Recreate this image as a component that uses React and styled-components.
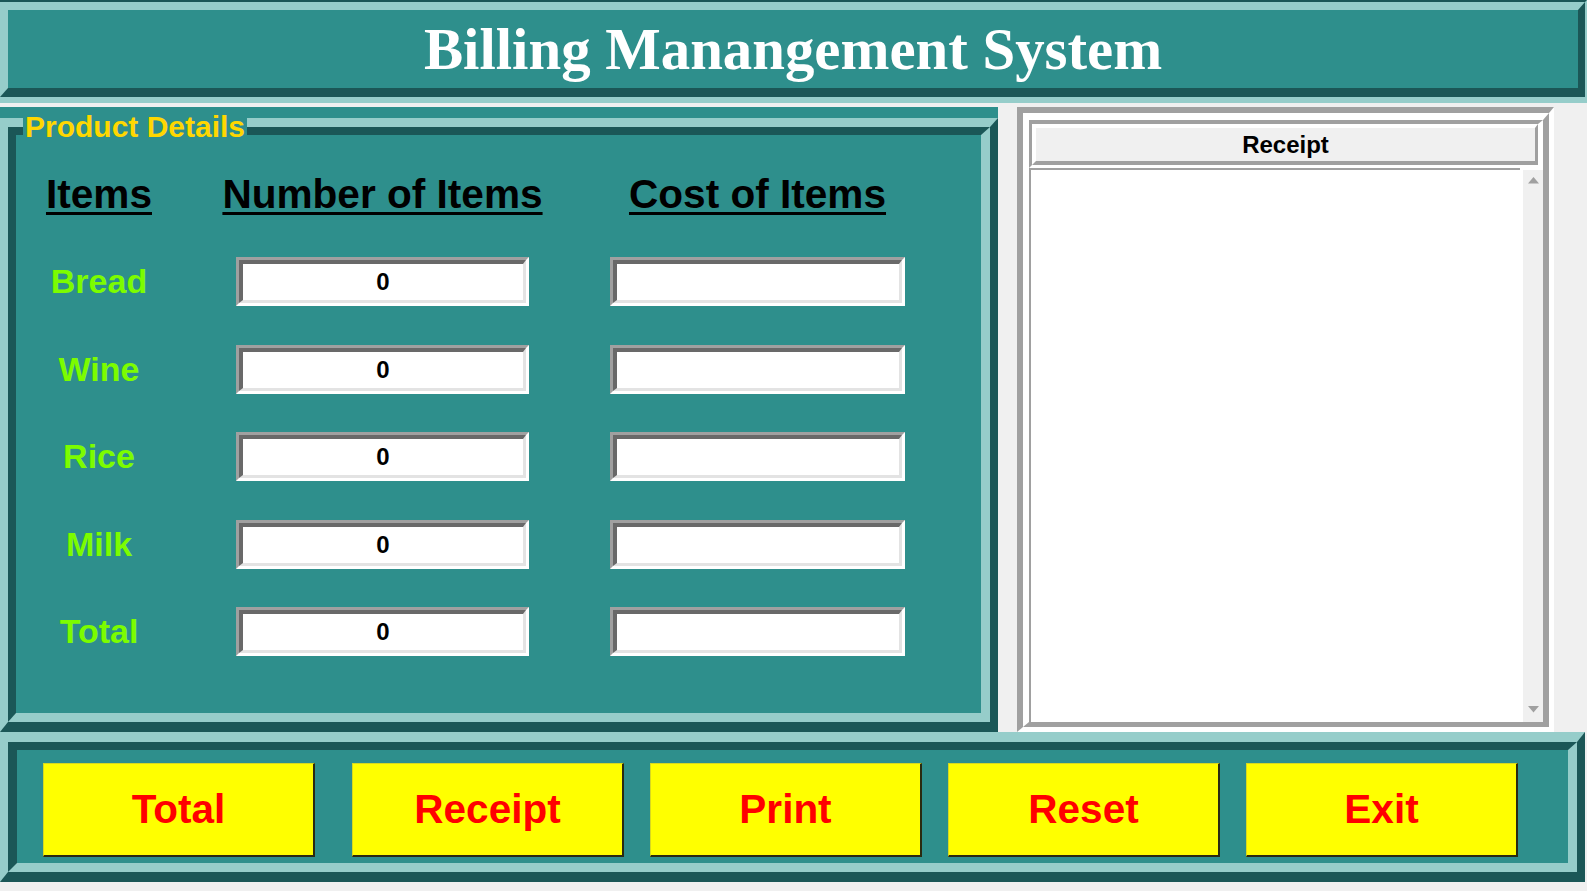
import React from "react";
import styled, { createGlobalStyle } from "styled-components";

const teal = "#2e8f8c";
const light = "#96cdca";
const dark = "#1b5757";
const g1 = "#a0a0a0";
const g2 = "#696969";
const g3 = "#e3e3e3";

const GlobalStyle = createGlobalStyle`
  html, body { margin: 0; padding: 0; background: #f0f0f0; overflow: hidden; }
  * { box-sizing: border-box; }
  #root { width: 1587px; height: 891px; }
`;

const Page = styled.div`
  width: 1587px;
  height: 891px;
  background: #f0f0f0;
  display: flex;
  flex-direction: column;
  font-family: "Liberation Sans", Arial, sans-serif;
`;

const TitleOuter = styled.header`
  height: 103px;
  border-style: solid;
  border-width: 2px 2px 6px 0;
  border-color: ${dark} ${light} ${light} ${dark};
`;

const TitleInner = styled.div`
  height: 100%;
  background: ${teal};
  border-style: solid;
  border-width: 8px 7px 9px 8px;
  border-color: ${light} ${dark} ${dark} ${light};
  display: flex;
  align-items: center;
  justify-content: center;
`;

const TitleText = styled.h1`
  margin: 0;
  font-family: "Liberation Serif", "Times New Roman", serif;
  font-weight: bold;
  font-size: 58.8px;
  line-height: 1;
  color: #ffffff;
  padding-top: 2px;
`;

const Main = styled.main`
  margin-top: 4px;
  height: 625px;
  display: flex;
`;

const ProductPanel = styled.section`
  width: 998px;
  height: 625px;
  background: ${teal};
  padding-top: 11px;
`;

const LabelOuter = styled.div`
  position: relative;
  height: 614px;
  border-style: solid;
  border-width: 9px 8px 10px 8px;
  border-color: ${light} ${dark} ${dark} ${light};
`;

const LabelInner = styled.div`
  height: 100%;
  background: ${teal};
  border-style: solid;
  border-width: 8px 9px 9px 8px;
  border-color: ${dark} ${light} ${light} ${dark};
`;

const Legend = styled.div`
  position: absolute;
  top: -15px;
  left: 15px;
  padding: 0 2px;
  background: ${teal};
  color: #ffd700;
  font-weight: bold;
  font-size: 30px;
  line-height: 30px;
`;

const ItemsGrid = styled.div`
  padding-top: 15px;
  display: grid;
  grid-template-columns: 166px 401px 349px;
  grid-template-rows: 88px repeat(5, 87.5px);
  align-items: center;
  justify-items: center;
`;

const HeaderCell = styled.div`
  font-weight: bold;
  font-size: 40.6px;
  color: #000;
  text-decoration: underline;
  text-decoration-thickness: 3px;
  text-underline-offset: 4px;
`;

const ItemLabel = styled.div`
  font-weight: bold;
  font-size: 34px;
  color: #7cfc00;
`;

const EntryFrame = styled.div`
  border-style: solid;
  border-width: 3px;
  border-color: ${g1} #ffffff #ffffff ${g1};
  display: flex;
`;

const Entry = styled.input`
  width: ${(p) => p.$w}px;
  height: 43px;
  margin: 0;
  padding: 0;
  background: #fff;
  border-style: solid;
  border-width: 4px 3px 3px 4px;
  border-color: ${g2} ${g3} ${g3} ${g2};
  outline: none;
  text-align: center;
  font-family: "Liberation Sans", Arial, sans-serif;
  font-weight: bold;
  font-size: 24px;
  color: #000;
`;

const ReceiptOuter = styled.aside`
  margin-left: 19px;
  width: 537px;
  height: 625px;
  border-style: solid;
  border-width: 6px 5px 5px 6px;
  border-color: ${g1} #fff #fff ${g1};
`;

const ReceiptInner = styled.div`
  height: 100%;
  border-style: solid;
  border-width: 7px 6px 5px 6px;
  border-color: #fff ${g1} ${g1} #fff;
  display: flex;
  flex-direction: column;
  background: #fff;
`;

const HeaderOuter = styled.div`
  height: 48px;
  border-style: solid;
  border-width: 4px 5px 3px 3px;
  border-color: ${g1} #fff #fff ${g1};
`;

const HeaderInner = styled.div`
  height: 100%;
  background: #f0f0f0;
  border-style: solid;
  border-width: 4px 3px 4px 4px;
  border-color: #fff ${g1} ${g1} #fff;
  display: flex;
  align-items: center;
  justify-content: center;
  font-weight: bold;
  font-size: 24px;
  color: #000;
`;

const ReceiptBody = styled.div`
  flex: 1;
  display: flex;
  background: #fff;
`;

const TextArea = styled.div`
  flex: 1;
  border-top: 2px solid ${g1};
  border-left: 2px solid ${g1};
  margin-right: 3px;
  background: #fff;
`;

const Scrollbar = styled.div`
  width: 20px;
  margin-top: 2px;
  background: #f0f0f0;
  display: flex;
  flex-direction: column;
  justify-content: space-between;
  align-items: center;
  padding: 7px 0 9px;
`;

const Arrow = ({ down }) => (
  <svg width="11" height="7" viewBox="0 0 11 7">
    <polygon
      points={down ? "0,0 11,0 5.5,6.5" : "0,6.5 11,6.5 5.5,0"}
      fill="#a0a0a0"
    />
  </svg>
);

const ButtonBarOuter = styled.footer`
  width: 1585px;
  height: 150px;
  border-style: solid;
  border-width: 10px 8px 10px 8px;
  border-color: ${light} ${dark} ${dark} ${light};
`;

const ButtonBarInner = styled.div`
  height: 100%;
  background: ${teal};
  border-style: solid;
  border-width: 8px 9px 9px 9px;
  border-color: ${dark} ${light} ${light} ${dark};
  display: flex;
  align-items: flex-start;
  gap: 26px;
  padding: 13px 0 0 26px;
`;

const ActionButton = styled.button`
  width: 272px;
  height: 94px;
  margin: 0 ${(p) => (p.$extra ? 11 : 0)}px 0 0;
  padding: 0;
  background: #ffff00;
  border-style: solid;
  border-width: 1px 2px 2px 1px;
  border-color: #d8d820 #2a2a10 #2a2a10 #d8d820;
  font-family: "Liberation Sans", Arial, sans-serif;
  font-weight: bold;
  font-size: 40.5px;
  color: #ff0000;
  cursor: pointer;
`;

const items = ["Bread", "Wine", "Rice", "Milk", "Total"];
const buttons = ["Total", "Receipt", "Print", "Reset", "Exit"];

export default function App() {
  return (
    <>
      <GlobalStyle />
      <Page>
        <TitleOuter>
          <TitleInner>
            <TitleText>Billing Manangement System</TitleText>
          </TitleInner>
        </TitleOuter>
        <Main>
          <ProductPanel>
            <LabelOuter>
              <Legend>Product Details</Legend>
              <LabelInner>
                <ItemsGrid>
                  <HeaderCell>Items</HeaderCell>
                  <HeaderCell>Number of Items</HeaderCell>
                  <HeaderCell>Cost of Items</HeaderCell>
                  {items.map((it) => (
                    <React.Fragment key={it}>
                      <ItemLabel>{it}</ItemLabel>
                      <EntryFrame>
                        <Entry $w={287} readOnly value="0" />
                      </EntryFrame>
                      <EntryFrame>
                        <Entry $w={289} readOnly value="" />
                      </EntryFrame>
                    </React.Fragment>
                  ))}
                </ItemsGrid>
              </LabelInner>
            </LabelOuter>
          </ProductPanel>
          <ReceiptOuter>
            <ReceiptInner>
              <HeaderOuter>
                <HeaderInner>Receipt</HeaderInner>
              </HeaderOuter>
              <ReceiptBody>
                <TextArea />
                <Scrollbar>
                  <Arrow />
                  <Arrow down />
                </Scrollbar>
              </ReceiptBody>
            </ReceiptInner>
          </ReceiptOuter>
        </Main>
        <ButtonBarOuter>
          <ButtonBarInner>
            {buttons.map((b, i) => (
              <ActionButton key={b} $extra={i === 0}>
                {b}
              </ActionButton>
            ))}
          </ButtonBarInner>
        </ButtonBarOuter>
      </Page>
    </>
  );
}
